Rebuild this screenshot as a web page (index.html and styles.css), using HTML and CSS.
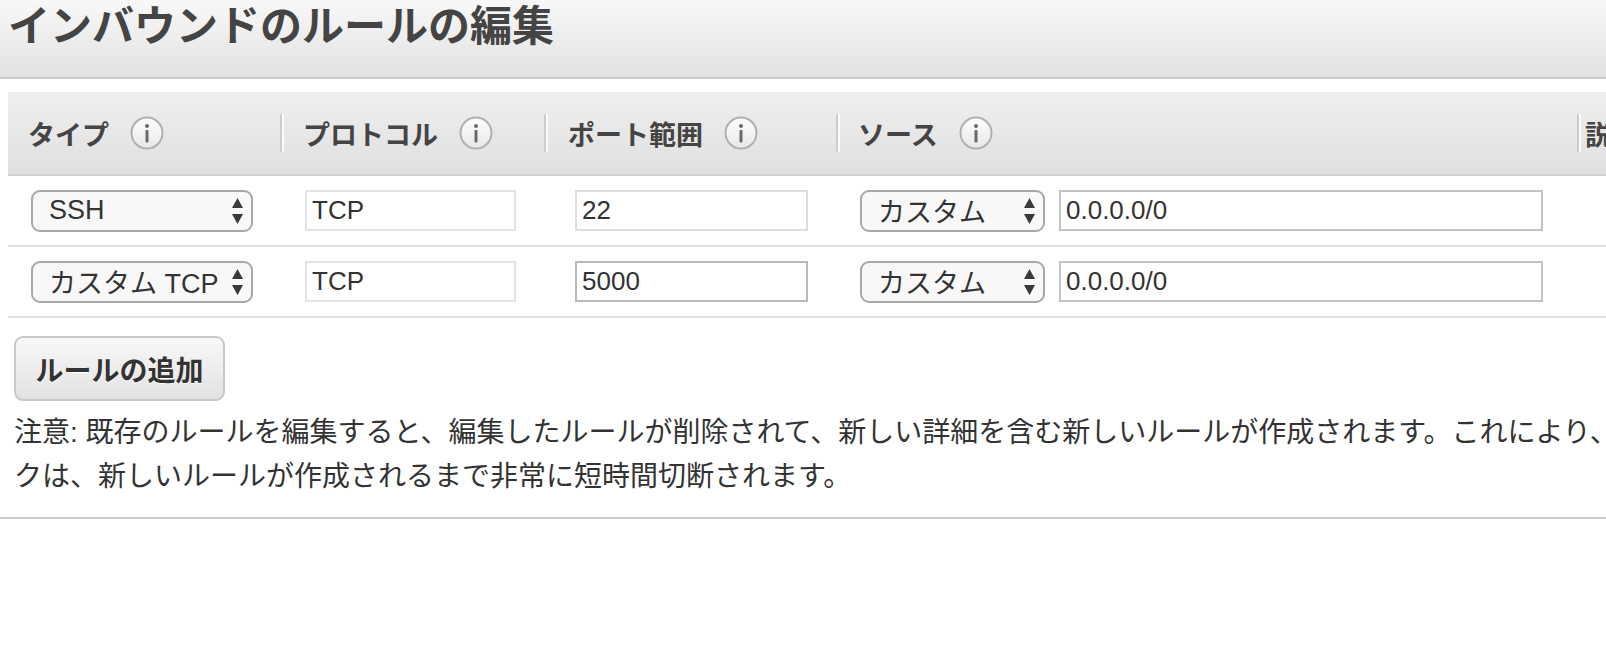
FILE: index.html
```html
<!DOCTYPE html>
<html lang="ja">
<head>
    <meta charset="utf-8">
    <title>インバウンドのルールの編集</title>
    <link rel="stylesheet" href="styles.css">
</head>
<body>
    <div class="page-title">
        <h1>インバウンドのルールの編集</h1>
    </div>

    <div class="rules">
        <div class="rules-head">
            <div class="th col-type">タイプ <span class="info-icon"><svg width="34" height="34" viewBox="0 0 34 34"><defs><linearGradient id="ig" x1="0" y1="0" x2="0" y2="1"><stop offset="0" stop-color="#fdfdfd"/><stop offset="1" stop-color="#e8e8e8"/></linearGradient></defs><circle cx="17" cy="17" r="15.5" fill="url(#ig)" stroke="#b0b0b0" stroke-width="2"/><circle cx="17" cy="10" r="2" fill="#6a6a6a"/><rect x="15.5" y="14" width="3" height="12.5" rx="1" fill="#6a6a6a"/></svg></span></div>
            <div class="th col-proto sep">プロトコル <span class="info-icon"><svg width="34" height="34" viewBox="0 0 34 34"><circle cx="17" cy="17" r="15.5" fill="url(#ig)" stroke="#b0b0b0" stroke-width="2"/><circle cx="17" cy="10" r="2" fill="#6a6a6a"/><rect x="15.5" y="14" width="3" height="12.5" rx="1" fill="#6a6a6a"/></svg></span></div>
            <div class="th col-port sep">ポート範囲 <span class="info-icon"><svg width="34" height="34" viewBox="0 0 34 34"><circle cx="17" cy="17" r="15.5" fill="url(#ig)" stroke="#b0b0b0" stroke-width="2"/><circle cx="17" cy="10" r="2" fill="#6a6a6a"/><rect x="15.5" y="14" width="3" height="12.5" rx="1" fill="#6a6a6a"/></svg></span></div>
            <div class="th col-src sep">ソース <span class="info-icon"><svg width="34" height="34" viewBox="0 0 34 34"><circle cx="17" cy="17" r="15.5" fill="url(#ig)" stroke="#b0b0b0" stroke-width="2"/><circle cx="17" cy="10" r="2" fill="#6a6a6a"/><rect x="15.5" y="14" width="3" height="12.5" rx="1" fill="#6a6a6a"/></svg></span></div>
            <div class="th col-desc sep">説明</div>
        </div>

        <div class="rule-row">
            <div class="col-type">
                <div class="fake-select type-select"><span>SSH</span><svg class="arrows" width="11" height="26" viewBox="0 0 11 26"><path d="M5.5 0 L11 10 L0 10 Z M0 16 L11 16 L5.5 26 Z" fill="#3a3a3a"/></svg></div>
            </div>
            <div class="col-proto"><input class="field field-proto" value="TCP" readonly></div>
            <div class="col-port"><input class="field field-port" value="22"></div>
            <div class="col-src">
                <div class="fake-select src-select"><span>カスタム</span><svg class="arrows" width="11" height="26" viewBox="0 0 11 26"><path d="M5.5 0 L11 10 L0 10 Z M0 16 L11 16 L5.5 26 Z" fill="#3a3a3a"/></svg></div>
                <input class="field field-cidr" value="0.0.0.0/0">
            </div>
            <div class="col-desc"></div>
        </div>

        <div class="rule-row">
            <div class="col-type">
                <div class="fake-select type-select"><span>カスタム TCP</span><svg class="arrows" width="11" height="26" viewBox="0 0 11 26"><path d="M5.5 0 L11 10 L0 10 Z M0 16 L11 16 L5.5 26 Z" fill="#3a3a3a"/></svg></div>
            </div>
            <div class="col-proto"><input class="field field-proto" value="TCP" readonly></div>
            <div class="col-port"><input class="field field-port dark" value="5000"></div>
            <div class="col-src">
                <div class="fake-select src-select"><span>カスタム</span><svg class="arrows" width="11" height="26" viewBox="0 0 11 26"><path d="M5.5 0 L11 10 L0 10 Z M0 16 L11 16 L5.5 26 Z" fill="#3a3a3a"/></svg></div>
                <input class="field field-cidr" value="0.0.0.0/0">
            </div>
            <div class="col-desc"></div>
        </div>
    </div>

    <div class="footer-area">
        <button class="add-rule">ルールの追加</button>
        <p class="note">
            <span class="note-line">注意: 既存のルールを編集すると、編集したルールが削除されて、新しい詳細を含む新しいルールが作成されます。これにより、そのルールに依存するトラフィッ</span>
            <span class="note-line">クは、新しいルールが作成されるまで非常に短時間切断されます。</span>
        </p>
    </div>
</body>
</html>
```

FILE: styles.css
```css
body {
    margin: 0;
    background-color: white;
    font-family: "Liberation Sans", "Noto Sans CJK JP", sans-serif;
    color: #444;
    overflow: hidden;
}

.page-title {
    height: 77px;
    background: linear-gradient(#f8f8f8, #e2e2e2);
    border-bottom: 2px solid #c9c9c9;
}

.page-title h1 {
    margin: 0;
    padding-left: 8px;
    font-family: "Noto Sans CJK JP", sans-serif;
    font-size: 42px;
    font-weight: bold;
    line-height: 46px;
    color: #444;
    white-space: nowrap;
}

.rules {
    margin: 13px 0 0 8px;
    width: 1800px;
}

.rules-head,
.rule-row {
    display: grid;
    grid-template-columns: 272px 264px 292px 741px 1fr;
    align-items: center;
}

.rules-head {
    height: 82px;
    background: linear-gradient(#efefef, #e0e0e0);
    border-bottom: 2px solid #d2d2d2;
}

.th {
    display: flex;
    align-items: center;
    height: 38px;
    font-family: "Noto Sans CJK JP", sans-serif;
    font-size: 27px;
    font-weight: bold;
    color: #444;
    white-space: nowrap;
}

.th.sep {
    border-left: 2px solid #cdcdcd;
    box-shadow: inset 2px 0 0 #fbfbfb;
}

.rules-head .col-type { padding-left: 20px; }
.rules-head .col-proto { padding-left: 21px; }
.rules-head .col-port { padding-left: 22px; }
.rules-head .col-src { padding-left: 20px; }
.rules-head .col-desc { padding-left: 6px; }

.info-icon {
    display: flex;
    margin-left: 21px;
}

.rule-row {
    height: 69px;
    border-bottom: 2px solid #e0e0e0;
}

.rule-row .col-type { padding-left: 23px; }
.rule-row .col-proto { padding-left: 25px; }
.rule-row .col-port { padding-left: 31px; }
.rule-row .col-src {
    padding-left: 24px;
    display: flex;
    align-items: center;
    gap: 14px;
}

.fake-select {
    box-sizing: border-box;
    height: 42px;
    display: flex;
    align-items: center;
    justify-content: space-between;
    padding: 0 8px 0 16px;
    border: 2px solid #a8a8a8;
    border-radius: 9px;
    background-color: #f8f8f8;
    font-size: 27px;
    color: #333;
    white-space: nowrap;
}

.type-select { width: 222px; }
.src-select { width: 185px; }

.field {
    box-sizing: border-box;
    height: 41px;
    padding: 0 0 0 5px;
    border: 2px solid #c4c4c4;
    background-color: white;
    font-family: "Liberation Sans", sans-serif;
    font-size: 26px;
    color: #333;
    outline: none;
}

.field-proto {
    width: 211px;
    border-color: #e4e4e4;
}

.field-port {
    width: 233px;
    border-color: #dedede;
}

.field-port.dark {
    border-color: #b9b9b9;
}

.field-cidr {
    width: 484px;
}

.footer-area {
    padding: 18px 0 18px 14px;
    border-bottom: 2px solid #cccccc;
}

.add-rule {
    box-sizing: border-box;
    width: 211px;
    height: 65px;
    border: 2px solid #c8c8c8;
    border-radius: 9px;
    background: linear-gradient(#f8f8f8, #e2e2e2);
    font-family: "Noto Sans CJK JP", sans-serif;
    font-size: 28px;
    font-weight: bold;
    color: #333;
    text-shadow: 0 1px 0 #fff;
    cursor: pointer;
}

.note {
    margin: 10px 0 0 0;
    font-family: "Liberation Sans", "Noto Sans CJK JP", sans-serif;
    font-size: 28px;
    line-height: 44px;
    color: #333;
}

.note-line {
    display: block;
    white-space: nowrap;
}
```
